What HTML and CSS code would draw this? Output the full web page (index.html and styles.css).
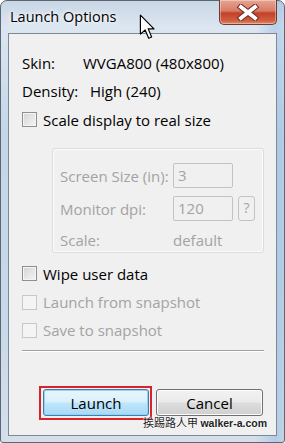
FILE: index.html
```html
<!DOCTYPE html>
<html>
<head>
<meta charset="utf-8">
<link rel="stylesheet" href="styles.css">
</head>
<body>
<div class="window">
  <div class="titlebar">
    <span class="title">Launch Options</span>
    <div class="close">
      <svg width="24" height="17" viewBox="0 0 24 17"><path d="M5 3 L19 14 M19 3 L5 14" stroke="#6a2a22" stroke-width="6" stroke-linecap="square"/><path d="M5 3 L19 14 M19 3 L5 14" stroke="#ffffff" stroke-width="4" stroke-linecap="square"/></svg>
    </div>
  </div>
  <div class="client">
    <div class="row"><span class="lbl">Skin:</span><span>WVGA800 (480x800)</span></div>
    <div class="row"><span class="lbl2">Density:</span><span>High (240)</span></div>
    <div class="row check"><span class="box"></span><span>Scale display to real size</span></div>
    <div class="group">
      <div class="grow"><span class="glbl">Screen Size (in):</span><span class="input">3</span></div>
      <div class="grow"><span class="glbl">Monitor dpi:</span><span class="input">120</span><span class="qbtn">?</span></div>
      <div class="grow last"><span class="glbl">Scale:</span><span class="val">default</span></div>
    </div>
    <div class="row check wipe"><span class="box"></span><span>Wipe user data</span></div>
    <div class="row check dis"><span class="box"></span><span>Launch from snapshot</span></div>
    <div class="row check dis"><span class="box"></span><span>Save to snapshot</span></div>
    <div class="sep"></div>
    <div class="buttons">
      <div class="focus"><div class="btn primary">Launch</div></div>
      <div class="btn">Cancel</div>
    </div>
    <div class="mark">挨踢路人甲 <b>walker-a.com</b></div>
  </div>
  <svg class="cursor" width="17" height="26" viewBox="0 0 14 22"><path d="M1 1 L1 17 L5 13.5 L8 20.5 L10.5 19.5 L7.6 12.6 L12.5 12.6 Z" fill="#fff" stroke="#000" stroke-width="1" stroke-linejoin="round"/></svg>
</div>
</body>
</html>
```
FILE: styles.css
```css
html, body { margin: 0; padding: 0; }
body { width: 285px; height: 443px; overflow: hidden; background: #fff; font-family: "Open Sans", "Noto Sans", sans-serif; }
.window {
  position: relative;
  box-sizing: border-box;
  width: 285px; height: 443px;
  border: 1px solid #5b6672;
  border-radius: 7px 7px 3px 3px;
  background: linear-gradient(to right, rgba(255,255,255,0) 0%, rgba(255,255,255,0) 90%, rgba(120,170,220,0.35) 97%, rgba(120,170,220,0.2) 100%),
              linear-gradient(to bottom, #c9d6e4 0%, #dbe6f1 6%, #c4d6e8 30%, #c8d8e8 70%, #d4dfea 100%);
  padding: 0 7px 6px 7px;
  display: flex; flex-direction: column;
}
.titlebar { height: 32px; display: flex; justify-content: space-between; align-items: flex-start; }
.title { font-size: 14.5px; color: #000; padding: 6px 0 0 2px; text-shadow: 0 0 6px #fff, 0 0 4px #fff; }
.close {
  width: 58px; height: 25px; box-sizing: border-box; margin-top: -1px;
  border: 1px solid #6e3a32; border-top: none; border-radius: 0 0 5px 5px;
  background: linear-gradient(to bottom, #e6a593 0%, #d77c66 45%, #c1412b 55%, #cf5e3f 85%, #e08a6a 100%);
  display: flex; align-items: center; justify-content: center;
  box-shadow: inset 0 0 0 1px rgba(255,255,255,0.35);
}
.client {
  flex: 1;
  background: #f0f0f0;
  border: 1px solid #7d8995;
  padding: 15px 0 0 13px;
  position: relative;
  font-size: 15px; color: #000;
}
.row { height: 28px; display: flex; align-items: center; white-space: nowrap; }
.lbl { width: 61px; }
.lbl2 { width: 68px; }
.check { height: 29px; }
.box {
  width: 13px; height: 13px; margin-right: 6px;
  border: 1px solid #8e8f8f;
  background: linear-gradient(135deg, #d4d4d4, #f5f5f5);
  box-shadow: inset 0 0 0 1px #f4f4f4;
}
.dis { color: #a3a3a3; height: 28px; }
.dis .box { border-color: #c8c8c8; background: #f4f4f4; box-shadow: none; }
.group {
  margin: 14px 0 0 30px;
  width: 212px; height: 105px; box-sizing: border-box;
  border: 1px solid #d8dde2; border-radius: 3px;
  box-shadow: inset 0 0 0 1px #fbfbfb;
  padding: 14px 0 0 7px;
  color: #a3a3a3;
}
.grow { display: flex; align-items: center; height: 25px; margin-bottom: 8px; white-space: nowrap; }
.grow.last { height: 22px; }
.glbl { width: 113px; }
.input {
  box-sizing: border-box; width: 60px; height: 25px;
  border: 1px solid #c3c3c3; border-radius: 2px;
  background: #f0f0f0; padding: 1px 0 0 4px; line-height: 21px;
}
.qbtn {
  box-sizing: border-box; width: 17px; height: 25px; margin-left: 5px;
  border: 1px solid #c3c3c3; border-radius: 3px; text-align: center; line-height: 22px;
  font-size: 14px;
}
.wipe { margin-top: 6px; height: 29px; }
.sep { margin: 6px 0 0 0; width: 242px; height: 1px; background: #a0a0a0; border-bottom: 1px solid #fff; }
.buttons { display: flex; align-items: flex-start; margin-top: 34px; margin-left: 17px; }
.focus { border: 2px solid #d9232a; padding: 1px 1px 2px 2px; }
.btn {
  box-sizing: border-box; height: 27px; width: 107px;
  border: 1px solid #707070; border-radius: 3px;
  background: linear-gradient(to bottom, #f2f2f2 0%, #ebebeb 48%, #dddddd 52%, #cfcfcf 100%);
  box-shadow: inset 0 0 0 1px #fcfcfc;
  display: flex; align-items: center; justify-content: center;
  font-size: 15px; margin-top: 3px; margin-left: 4px;
}
.btn.primary {
  width: 106px; margin: 0;
  border-color: #3c7fb1;
  background: linear-gradient(to bottom, #eaf6fd 0%, #d9f0fc 48%, #bee6fd 52%, #a7d9f5 100%);
  box-shadow: inset 0 0 0 1px #98d1ef;
}
.mark {
  position: absolute; right: 9px; bottom: 5px;
  font-family: "Noto Sans CJK TC", "Liberation Sans", sans-serif;
  font-size: 11px; color: #222; white-space: nowrap;
  text-shadow: 0 0 2px #fff, 0 0 2px #fff;
}
.mark b { font-family: "Liberation Sans", sans-serif; font-weight: bold; font-size: 10.5px; }
.cursor { position: absolute; left: 138px; top: 13px; }
```
